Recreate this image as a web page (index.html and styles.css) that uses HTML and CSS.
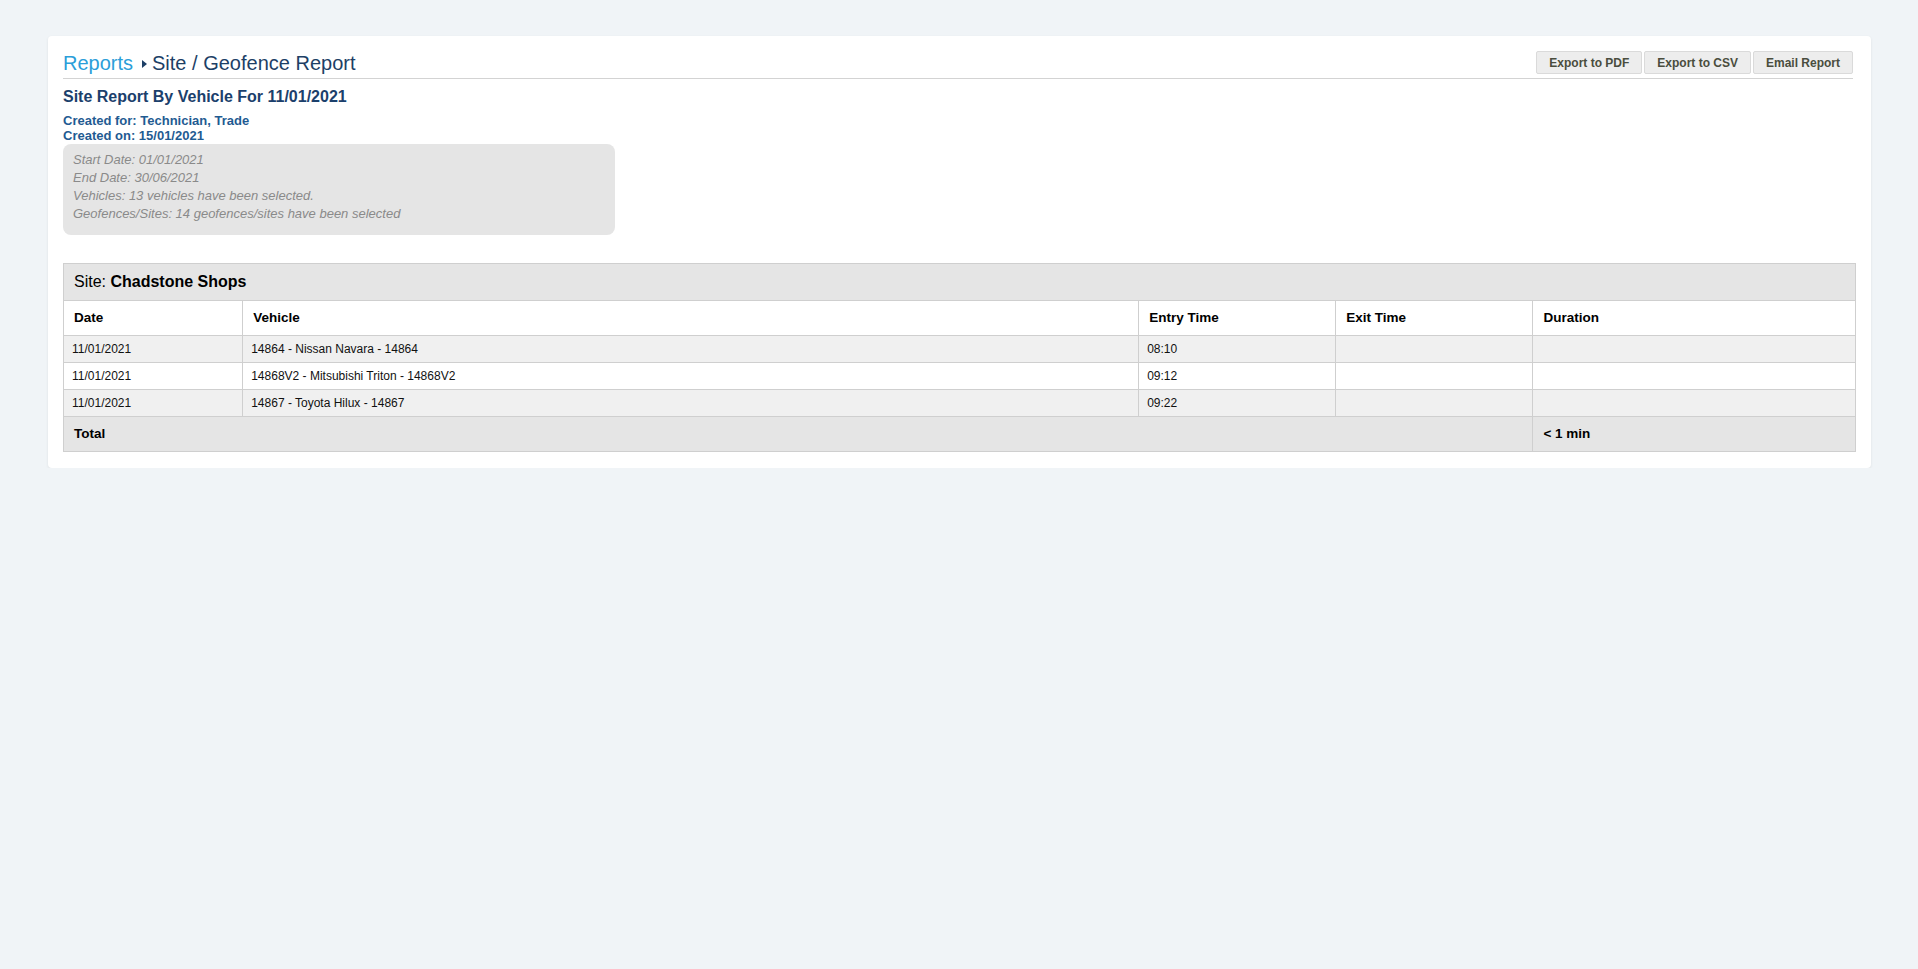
FILE: index.html
```html
<!DOCTYPE html>
<html lang="en">
<head>
    <meta charset="UTF-8">
    <title>Site / Geofence Report</title>
    <link rel="stylesheet" href="styles.css">
</head>
<body>
    <div class="card">
        <div class="page-header">
            <h1 class="breadcrumb">
                <a href="#" class="crumb-link">Reports</a>
                <span class="crumb-caret"></span>
                <span>Site / Geofence Report</span>
            </h1>
            <div class="actions">
                <button type="button" class="btn">Export to PDF</button>
                <button type="button" class="btn">Export to CSV</button>
                <button type="button" class="btn">Email Report</button>
            </div>
        </div>

        <h2 class="report-title">Site Report By Vehicle For 11/01/2021</h2>
        <div class="report-meta">
            <div>Created for: Technician, Trade</div>
            <div>Created on: 15/01/2021</div>
        </div>

        <div class="criteria">
            <div>Start Date: 01/01/2021</div>
            <div>End Date: 30/06/2021</div>
            <div>Vehicles: 13 vehicles have been selected.</div>
            <div>Geofences/Sites: 14 geofences/sites have been selected</div>
        </div>

        <table class="report-table">
            <colgroup>
                <col class="col-date">
                <col class="col-vehicle">
                <col class="col-time">
                <col class="col-time">
                <col>
            </colgroup>
            <thead>
                <tr>
                    <th colspan="5" class="site-head">Site: <b>Chadstone Shops</b></th>
                </tr>
                <tr class="col-head">
                    <th>Date</th>
                    <th>Vehicle</th>
                    <th>Entry Time</th>
                    <th>Exit Time</th>
                    <th>Duration</th>
                </tr>
            </thead>
            <tbody>
                <tr class="odd">
                    <td>11/01/2021</td>
                    <td>14864 - Nissan Navara - 14864</td>
                    <td>08:10</td>
                    <td></td>
                    <td></td>
                </tr>
                <tr>
                    <td>11/01/2021</td>
                    <td>14868V2 - Mitsubishi Triton - 14868V2</td>
                    <td>09:12</td>
                    <td></td>
                    <td></td>
                </tr>
                <tr class="odd">
                    <td>11/01/2021</td>
                    <td>14867 - Toyota Hilux - 14867</td>
                    <td>09:22</td>
                    <td></td>
                    <td></td>
                </tr>
            </tbody>
            <tfoot>
                <tr>
                    <th colspan="4">Total</th>
                    <th>&lt; 1 min</th>
                </tr>
            </tfoot>
        </table>
    </div>
</body>
</html>
```

FILE: styles.css
```css
body {
    margin: 0;
    background: #f0f4f7;
    font-family: "Liberation Sans", Arial, sans-serif;
    color: #000;
}

.card {
    margin: 36px 47px 0 48px;
    padding: 15px 15px 16px 15px;
    background: #fff;
    border-radius: 4px;
    box-shadow: 0 1px 3px rgba(0, 0, 0, 0.08);
}

.page-header {
    display: flex;
    justify-content: space-between;
    align-items: flex-start;
    margin-right: 3px;
    padding-bottom: 3px;
    border-bottom: 1px solid #d3d3d3;
}

.breadcrumb {
    margin: 0;
    font-size: 20px;
    line-height: 24px;
    font-weight: normal;
    color: #1d3f66;
    display: flex;
    align-items: center;
}

.crumb-link {
    color: #2b9ed9;
    text-decoration: none;
}

.crumb-caret {
    display: inline-block;
    width: 0;
    height: 0;
    margin: 2px 5px 0 9px;
    border-top: 4px solid transparent;
    border-bottom: 4px solid transparent;
    border-left: 5px solid #1d3f66;
}

.actions {
    display: flex;
    gap: 2px;
}

.btn {
    height: 23px;
    padding: 0 12px;
    background: #ededed;
    border: 1px solid #dadada;
    border-radius: 2px;
    font-family: "Liberation Sans", Arial, sans-serif;
    font-size: 12px;
    font-weight: bold;
    color: #4a4d3e;
    cursor: pointer;
}

.report-title {
    margin: 8px 0 0;
    font-size: 16px;
    line-height: 20px;
    color: #1b406c;
}

.report-meta {
    margin-top: 6px;
    font-size: 13px;
    line-height: 15px;
    font-weight: bold;
    color: #1f5b92;
}

.criteria {
    width: 532px;
    margin-top: 1px;
    padding: 7px 10px 12px;
    background: #e5e5e5;
    border-radius: 8px;
    font-size: 13px;
    line-height: 18px;
    font-style: italic;
    color: #8a8a8a;
}

.report-table {
    width: 100%;
    margin-top: 28px;
    border-collapse: collapse;
    table-layout: fixed;
}

.col-date {
    width: 10%;
}

.col-vehicle {
    width: 50%;
}

.col-time {
    width: 11%;
}

.report-table th,
.report-table td {
    border: 1px solid #cfcfcf;
    text-align: left;
}

.site-head {
    padding: 8px 10px;
    font-size: 16px;
    line-height: 20px;
    font-weight: normal;
    background: #e5e5e5;
}

.col-head th {
    padding: 8px 10px;
    font-size: 13.5px;
    line-height: 18px;
    background: #fff;
}

.report-table td {
    padding: 5px 8px;
    font-size: 12px;
    line-height: 16px;
    color: #111;
    background: #fff;
}

.report-table tr.odd td {
    background: #f0f0f0;
}

.report-table tfoot th {
    padding: 8px 10px;
    font-size: 13.5px;
    line-height: 18px;
    background: #e5e5e5;
}
```
